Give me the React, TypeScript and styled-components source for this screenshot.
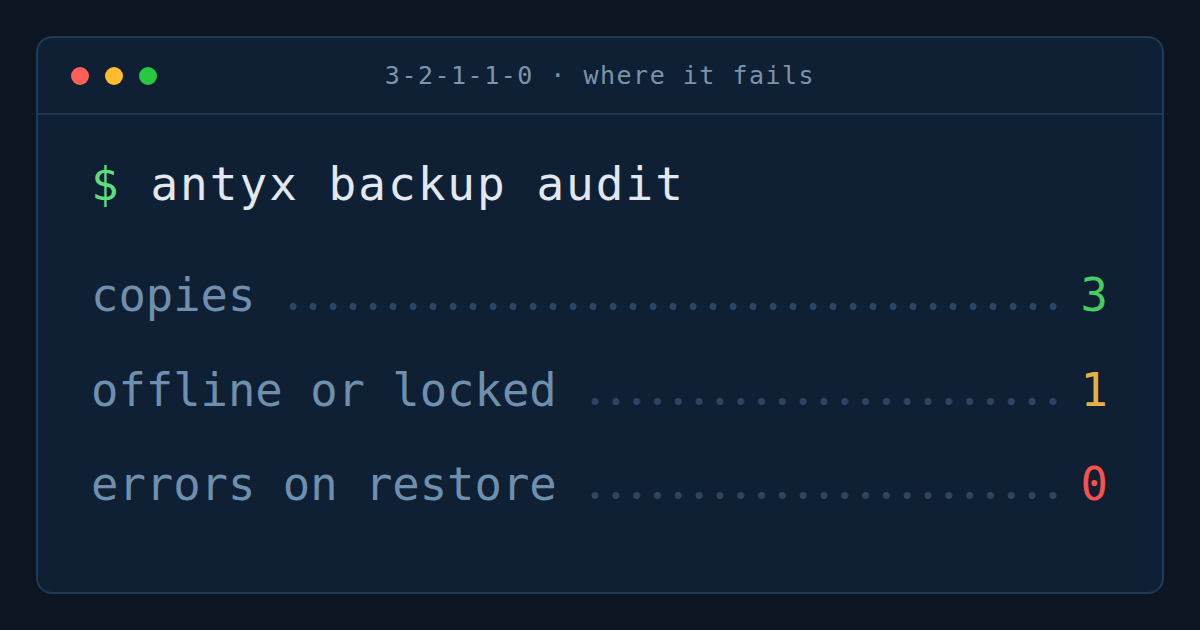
import React from "react";
import styled, { createGlobalStyle } from "styled-components";

const Global = createGlobalStyle`
  html, body { margin: 0; padding: 0; background: #0b1622; }
  body { font-family: "DejaVu Sans Mono", "Liberation Mono", monospace; }
`;

const Page = styled.div`
  width: 1200px;
  height: 630px;
  box-sizing: border-box;
  padding: 36px;
  background: #0b1622;
`;

const Card = styled.div`
  height: 100%;
  box-sizing: border-box;
  background: #0f2035;
  border: 2px solid #1f3a56;
  border-radius: 16px;
  display: flex;
  flex-direction: column;
`;

const TitleBar = styled.div`
  height: 75px;
  box-sizing: content-box;
  border-bottom: 2px solid #1c3550;
  display: grid;
  grid-template-columns: 1fr auto 1fr;
  align-items: center;
  padding: 0 33px;
`;

const Lights = styled.div`
  display: flex;
  gap: 16px;
`;

const Light = styled.span<{ $c: string }>`
  width: 18px;
  height: 18px;
  border-radius: 50%;
  background: ${(p) => p.$c};
`;

const Title = styled.div`
  font-size: 25px;
  letter-spacing: 1.5px;
  color: #7b93ab;
  white-space: pre;
`;

const Body = styled.div`
  padding: 42px 54px 0 53px;
  display: flex;
  flex-direction: column;
`;

const Command = styled.div`
  font-size: 46px;
  line-height: 1.2;
  letter-spacing: 2px;
  color: #e2e8f0;
  white-space: pre;
  margin-bottom: 57px;
`;

const Prompt = styled.span`
  color: #5fdc7f;
`;

const Rows = styled.div`
  display: flex;
  flex-direction: column;
  gap: 40px;
`;

const Row = styled.div`
  display: flex;
  align-items: baseline;
  font-size: 45.5px;
  line-height: 1.2;
  white-space: pre;
`;

const Label = styled.span`
  color: #6f8fad;
`;

const Leader = styled.span`
  flex: 1;
  height: 9px;
  margin: 0 18px 0 28px;
  background-image: radial-gradient(circle at center, #2b4664 3.2px, transparent 3.8px);
  background-size: 20px 9px;
  background-repeat: space no-repeat;
`;

const Value = styled.span<{ $c: string }>`
  color: ${(p) => p.$c};
`;

const rows = [
  { label: "copies", value: "3", color: "#46cf5f" },
  { label: "offline or locked", value: "1", color: "#e3b341" },
  { label: "errors on restore", value: "0", color: "#f8514f" },
];

export default function App() {
  return (
    <>
      <Global />
      <Page>
        <Card>
          <TitleBar>
            <Lights>
              <Light $c="#ff5f57" />
              <Light $c="#febc2e" />
              <Light $c="#28c840" />
            </Lights>
            <Title>3-2-1-1-0 · where it fails</Title>
            <span />
          </TitleBar>
          <Body>
            <Command>
              <Prompt>$</Prompt> antyx backup audit
            </Command>
            <Rows>
              {rows.map((r) => (
                <Row key={r.label}>
                  <Label>{r.label}</Label>
                  <Leader />
                  <Value $c={r.color}>{r.value}</Value>
                </Row>
              ))}
            </Rows>
          </Body>
        </Card>
      </Page>
    </>
  );
}
